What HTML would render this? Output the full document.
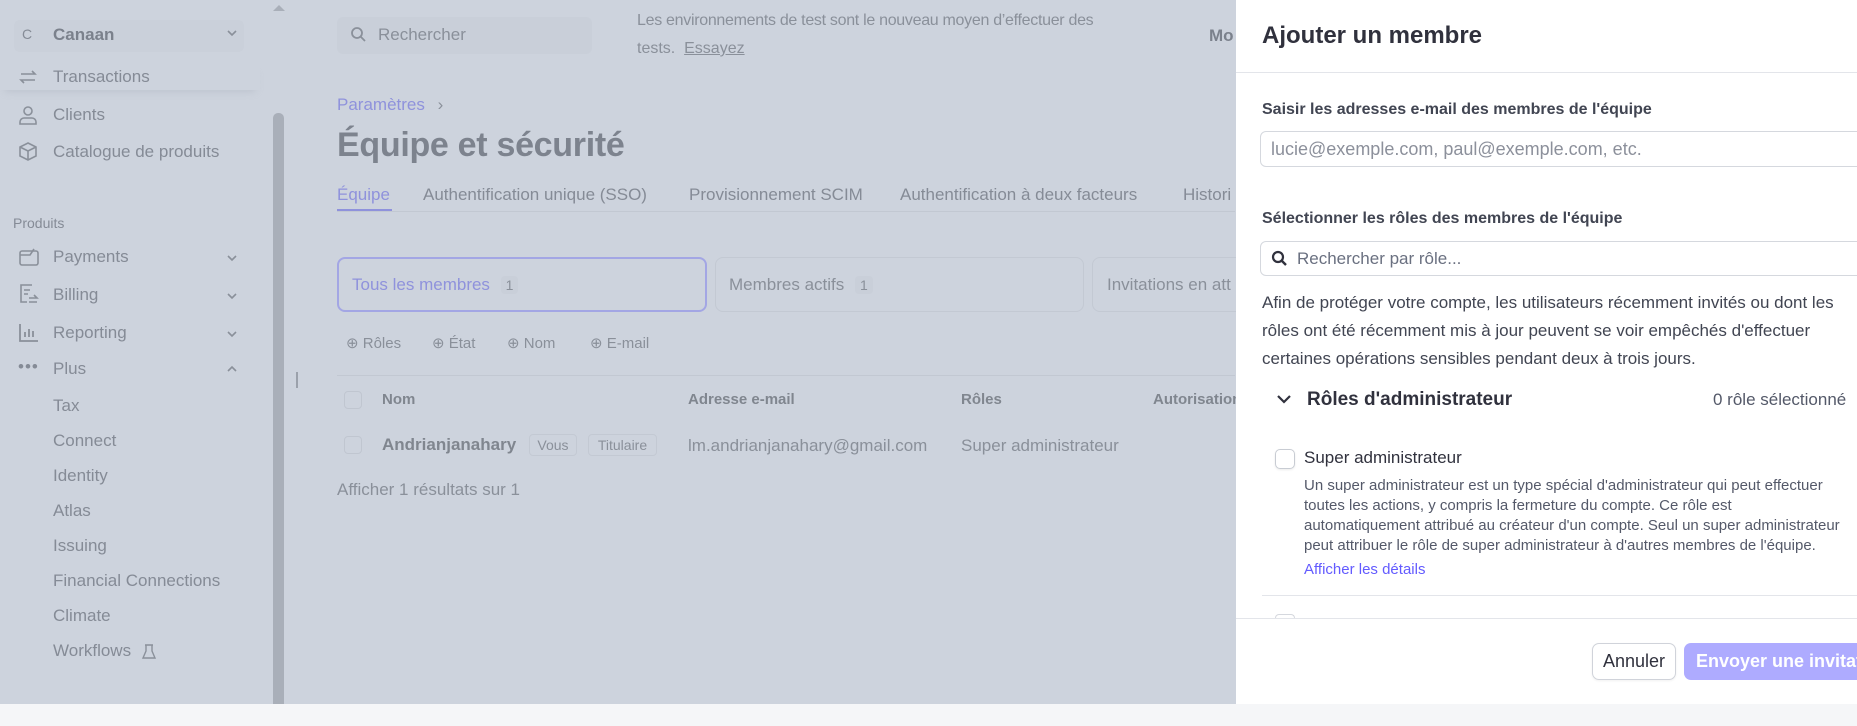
<!DOCTYPE html>
<html><head><meta charset="utf-8"><style>
*{margin:0;padding:0;box-sizing:border-box}
body{width:1857px;height:726px;overflow:hidden;position:relative;background:#cdd3dd;font-family:"Liberation Sans",sans-serif;color:#808692}
.a{position:absolute;white-space:nowrap}
.sb{font-size:17px;color:#858b96}
.ic{position:absolute}
.m{color:#414552}
</style></head><body>
<!-- sidebar -->
<div class="a" style="left:14px;top:20px;width:230px;height:32px;background:#cad0da;border-radius:6px"></div>
<div class="a sb" style="left:22px;top:26px;font-size:14px">C</div>
<div class="a sb" style="left:53px;top:25px;font-weight:bold;color:#7b818c">Canaan</div>
<svg class="ic" style="left:226px;top:28px" width="12" height="10"><path d="M2 3l4 4 4-4" stroke="#8a909a" stroke-width="1.6" fill="none"/></svg>
<div class="a" style="left:0;top:62px;width:260px;height:28px;box-shadow:0 6px 8px -5px rgba(160,168,180,.4)"></div>
<div class="a sb" style="left:53px;top:67px">Transactions</div>
<svg class="ic" style="left:18px;top:68px" width="22" height="18"><path d="M3 6h14l-3-3M17 12H3l3 3" stroke="#8a909a" stroke-width="1.6" fill="none"/></svg>
<div class="a sb" style="left:53px;top:105px">Clients</div>
<svg class="ic" style="left:18px;top:104px" width="22" height="22"><circle cx="10" cy="7" r="4" stroke="#8a909a" stroke-width="1.6" fill="none"/><path d="M2 20v-2a4 4 0 0 1 4-4h8a4 4 0 0 1 4 4v2z" stroke="#8a909a" stroke-width="1.6" fill="none"/></svg>
<div class="a sb" style="left:53px;top:142px">Catalogue de produits</div>
<svg class="ic" style="left:18px;top:141px" width="22" height="22"><path d="M10 2l8 4v9l-8 4-8-4V6zM2 6l8 4 8-4M10 10v9" stroke="#8a909a" stroke-width="1.6" fill="none"/></svg>
<div class="a sb" style="left:13px;top:215px;font-size:14px">Produits</div>
<div class="a sb" style="left:53px;top:247px">Payments</div>
<svg class="ic" style="left:18px;top:246px" width="22" height="22"><rect x="2" y="5" width="18" height="14" rx="2" stroke="#8a909a" stroke-width="1.6" fill="none"/><path d="M2 9h10l4-6" stroke="#8a909a" stroke-width="1.6" fill="none"/></svg>
<div class="a sb" style="left:53px;top:285px">Billing</div>
<svg class="ic" style="left:18px;top:283px" width="22" height="22"><path d="M14 2H3v17h6M6 7h6M6 11h4M11 15h8l-3-3M19 19h-8" stroke="#8a909a" stroke-width="1.6" fill="none"/></svg>
<div class="a sb" style="left:53px;top:323px">Reporting</div>
<svg class="ic" style="left:18px;top:321px" width="22" height="22"><path d="M2 3v17h18M7 16v-5M11 16V8M15 16v-6" stroke="#8a909a" stroke-width="1.8" fill="none"/></svg>
<div class="a sb" style="left:53px;top:359px">Plus</div>
<div class="a sb" style="left:18px;top:357px;letter-spacing:1px">•••</div>
<svg class="ic" style="left:226px;top:253px" width="12" height="10"><path d="M2 3l4 4 4-4" stroke="#8a909a" stroke-width="1.6" fill="none"/></svg>
<svg class="ic" style="left:226px;top:291px" width="12" height="10"><path d="M2 3l4 4 4-4" stroke="#8a909a" stroke-width="1.6" fill="none"/></svg>
<svg class="ic" style="left:226px;top:329px" width="12" height="10"><path d="M2 3l4 4 4-4" stroke="#8a909a" stroke-width="1.6" fill="none"/></svg>
<svg class="ic" style="left:226px;top:364px" width="12" height="10"><path d="M2 7l4-4 4 4" stroke="#8a909a" stroke-width="1.6" fill="none"/></svg>
<div class="a sb" style="left:53px;top:396px">Tax</div>
<div class="a sb" style="left:53px;top:431px">Connect</div>
<div class="a sb" style="left:53px;top:466px">Identity</div>
<div class="a sb" style="left:53px;top:501px">Atlas</div>
<div class="a sb" style="left:53px;top:536px">Issuing</div>
<div class="a sb" style="left:53px;top:571px">Financial Connections</div>
<div class="a sb" style="left:53px;top:606px">Climate</div>
<div class="a sb" style="left:53px;top:641px">Workflows</div>
<svg class="ic" style="left:141px;top:643px" width="16" height="18"><path d="M5 2v6L2 15h12L11 8V2M4 2h8" stroke="#8a909a" stroke-width="1.4" fill="none"/></svg>
<div class="a" style="left:273px;top:113px;width:11px;height:591px;background:#a9afb9;border-radius:5px 5px 0 0"></div>
<svg class="ic" style="left:272px;top:4px" width="14" height="8"><path d="M1 7l6-6 6 6z" fill="#a9afb9"/></svg>
<div class="a" style="left:296px;top:372px;width:2px;height:16px;background:#9ba1ab"></div>
<!-- main -->
<div class="a" style="left:337px;top:17px;width:255px;height:37px;background:#c9cfd9;border-radius:6px"></div>
<svg class="ic" style="left:350px;top:26px" width="18" height="18"><circle cx="7" cy="7" r="5" stroke="#8a909a" stroke-width="1.8" fill="none"/><path d="M11 11l4 4" stroke="#8a909a" stroke-width="1.8"/></svg>
<div class="a" style="left:378px;top:25px;font-size:17px;color:#8a909a">Rechercher</div>
<div class="a" style="left:637px;top:12px;font-size:16px;color:#8a909a;letter-spacing:-.3px">Les environnements de test sont le nouveau moyen d’effectuer des</div>
<div class="a" style="left:637px;top:40px;font-size:16px;color:#8a909a">tests. &nbsp;<span style="text-decoration:underline">Essayez</span></div>
<div class="a" style="left:1209px;top:26px;font-size:17px;font-weight:bold;color:#7b818c">Mo</div>
<div class="a" style="left:337px;top:95px;font-size:17px;color:#8f92dc">Paramètres <span style="color:#8a909a;margin-left:8px">›</span></div>
<div class="a" style="left:337px;top:126px;font-size:34px;font-weight:bold;color:#7d838e;letter-spacing:-.3px">Équipe et sécurité</div>
<div class="a" style="left:337px;top:185px;font-size:17px;color:#8f92dc">Équipe</div>
<div class="a" style="left:337px;top:209px;width:55px;height:2px;background:#8f92dc"></div>
<div class="a" style="left:337px;top:211px;width:898px;height:1px;background:#c2c8d2"></div>
<div class="a" style="left:423px;top:185px;font-size:17px;color:#858b96">Authentification unique (SSO)</div>
<div class="a" style="left:689px;top:185px;font-size:17px;color:#858b96">Provisionnement SCIM</div>
<div class="a" style="left:900px;top:185px;font-size:17px;color:#858b96">Authentification à deux facteurs</div>
<div class="a" style="left:1183px;top:185px;font-size:17px;color:#858b96">Histori</div>
<div class="a" style="left:337px;top:257px;width:370px;height:55px;border:2px solid #a3a6e4;border-radius:8px"></div>
<div class="a" style="left:352px;top:275px;font-size:17px;color:#8f92dc">Tous les membres <span style="color:#8a909a;background:#c9cfd9;padding:1px 5px;border-radius:4px;font-size:14px;margin-left:6px">1</span></div>
<div class="a" style="left:715px;top:257px;width:369px;height:55px;border:1px solid #c3c9d3;border-radius:8px"></div>
<div class="a" style="left:729px;top:275px;font-size:17px;color:#8a909a">Membres actifs <span style="background:#c9cfd9;padding:1px 5px;border-radius:4px;font-size:14px;margin-left:6px">1</span></div>
<div class="a" style="left:1092px;top:257px;width:200px;height:55px;border:1px solid #c3c9d3;border-radius:8px"></div>
<div class="a" style="left:1107px;top:275px;font-size:17px;color:#8a909a">Invitations en att</div>
<div class="a" style="left:346px;top:334px;font-size:15px;color:#8a909a">⊕ Rôles</div>
<div class="a" style="left:432px;top:334px;font-size:15px;color:#8a909a">⊕ État</div>
<div class="a" style="left:507px;top:334px;font-size:15px;color:#8a909a">⊕ Nom</div>
<div class="a" style="left:590px;top:334px;font-size:15px;color:#8a909a">⊕ E-mail</div>
<div class="a" style="left:337px;top:375px;width:898px;height:1px;background:#c2c8d2"></div>
<div class="a" style="left:344px;top:391px;width:18px;height:18px;border:1px solid #c0c6d0;border-radius:4px"></div>
<div class="a" style="left:382px;top:391px;font-size:15px;font-weight:bold;color:#80868f">Nom</div>
<div class="a" style="left:688px;top:391px;font-size:15px;font-weight:bold;color:#80868f">Adresse e-mail</div>
<div class="a" style="left:961px;top:391px;font-size:15px;font-weight:bold;color:#80868f">Rôles</div>
<div class="a" style="left:1153px;top:391px;font-size:15px;font-weight:bold;color:#80868f">Autorisation</div>
<div class="a" style="left:344px;top:436px;width:18px;height:18px;border:1px solid #c0c6d0;border-radius:4px"></div>
<div class="a" style="left:382px;top:435px;font-size:17px;font-weight:bold;color:#80868f">Andrianjanahary</div>
<div class="a" style="left:529px;top:434px;width:48px;height:22px;border:1px solid #c3c9d3;border-radius:4px;font-size:14px;color:#8a909a;text-align:center;line-height:20px">Vous</div>
<div class="a" style="left:588px;top:434px;width:69px;height:22px;border:1px solid #c3c9d3;border-radius:4px;font-size:14px;color:#8a909a;text-align:center;line-height:20px">Titulaire</div>
<div class="a" style="left:688px;top:436px;font-size:17px;color:#8a909a">lm.andrianjanahary@gmail.com</div>
<div class="a" style="left:961px;top:436px;font-size:17px;color:#8a909a">Super administrateur</div>
<div class="a" style="left:337px;top:480px;font-size:17px;color:#8a909a">Afficher 1 résultats sur 1</div>
<!-- bottom strip -->
<div class="a" style="left:0;top:704px;width:1857px;height:22px;background:#f5f6f8"></div>
<!-- modal -->
<div class="a" style="left:1236px;top:0;width:621px;height:704px;background:#fff"></div>
<div class="a m" style="left:1262px;top:22px;font-size:24px;font-weight:bold;color:#30313d">Ajouter un membre</div>
<div class="a" style="left:1236px;top:72px;width:621px;height:1px;background:#e3e5ea"></div>
<div class="a m" style="left:1262px;top:101px;font-size:16px;font-weight:bold">Saisir les adresses e-mail des membres de l'équipe</div>
<div class="a" style="left:1260px;top:131px;width:620px;height:36px;border:1px solid #d5d8de;border-radius:6px"></div>
<div class="a" style="left:1271px;top:139px;font-size:18px;color:#8c909b">lucie@exemple.com, paul@exemple.com, etc.</div>
<div class="a m" style="left:1262px;top:210px;font-size:16px;font-weight:bold">Sélectionner les rôles des membres de l'équipe</div>
<div class="a" style="left:1260px;top:241px;width:620px;height:35px;border:1px solid #d5d8de;border-radius:6px"></div>
<svg class="ic" style="left:1271px;top:250px" width="18" height="18"><circle cx="7" cy="7" r="5" stroke="#30313d" stroke-width="2.2" fill="none"/><path d="M11 11l4 4" stroke="#30313d" stroke-width="2.4"/></svg>
<div class="a" style="left:1297px;top:249px;font-size:17px;color:#6a7080">Rechercher par rôle...</div>
<div class="a m" style="left:1262px;top:289px;font-size:17px;line-height:28px;white-space:normal;width:600px">Afin de protéger votre compte, les utilisateurs récemment invités ou dont les rôles ont été récemment mis à jour peuvent se voir empêchés d'effectuer certaines opérations sensibles pendant deux à trois jours.</div>
<svg class="ic" style="left:1276px;top:393px" width="16" height="12"><path d="M2 3l6 6 6-6" stroke="#30313d" stroke-width="2.2" fill="none"/></svg>
<div class="a" style="left:1307px;top:389px;font-size:19px;font-weight:bold;color:#30313d">Rôles d'administrateur</div>
<div class="a m" style="left:1713px;top:390px;font-size:17px;color:#545969">0 rôle sélectionné</div>
<div class="a" style="left:1275px;top:449px;width:20px;height:20px;border:1px solid #c8ccd3;border-radius:5px;box-shadow:0 1px 2px rgba(0,0,0,.08)"></div>
<div class="a m" style="left:1304px;top:448px;font-size:17px;color:#30313d">Super administrateur</div>
<div class="a" style="left:1304px;top:476px;font-size:15px;line-height:20px;color:#545969">Un super administrateur est un type spécial d'administrateur qui peut effectuer<br>toutes les actions, y compris la fermeture du compte. Ce rôle est<br>automatiquement attribué au créateur d'un compte. Seul un super administrateur<br>peut attribuer le rôle de super administrateur à d'autres membres de l'équipe.</div>
<div class="a" style="left:1304px;top:561px;font-size:15px;color:#635bff">Afficher les détails</div>
<div class="a" style="left:1262px;top:595px;width:595px;height:1px;background:#e3e5ea"></div>
<div class="a" style="left:1275px;top:614px;width:20px;height:4px;border:1px solid #d5d8de;border-bottom:none;border-radius:5px 5px 0 0"></div>
<div class="a" style="left:1236px;top:618px;width:621px;height:1px;background:#e3e5ea"></div>
<div class="a" style="left:1592px;top:643px;width:84px;height:37px;border:1px solid #d0d3da;border-radius:7px;font-size:18px;color:#30313d;text-align:center;line-height:35px;box-shadow:0 1px 2px rgba(0,0,0,.06)">Annuler</div>
<div class="a" style="left:1684px;top:643px;width:200px;height:37px;background:#aeabff;border-radius:7px;font-size:18px;font-weight:bold;color:#fff;line-height:37px;padding-left:12px">Envoyer une invitation</div>
</body></html>
